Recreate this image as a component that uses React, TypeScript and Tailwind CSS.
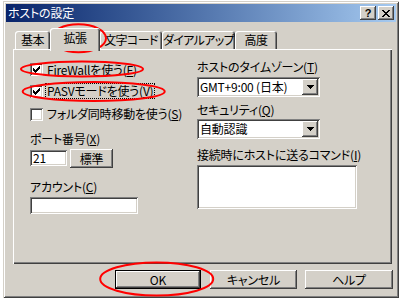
import React from "react";

const raised =
  "shadow-[inset_-1px_-1px_#404040,inset_1px_1px_#ffffff,inset_-2px_-2px_#808080,inset_2px_2px_#d4d0c8]";
const sunken =
  "shadow-[inset_1px_1px_#808080,inset_-1px_-1px_#ffffff,inset_2px_2px_#404040,inset_-2px_-2px_#d4d0c8]";

function Mark() {
  // classic 7x7 check mark
  const px: [number, number][] = [
    [6, 0], [5, 1], [6, 1], [0, 2], [4, 2], [5, 2], [6, 2],
    [0, 3], [1, 3], [3, 3], [4, 3], [5, 3],
    [0, 4], [1, 4], [2, 4], [3, 4], [4, 4],
    [1, 5], [2, 5], [3, 5], [2, 6],
  ];
  return (
    <svg width="7" height="7" viewBox="0 0 7 7" shapeRendering="crispEdges">
      {px.map(([x, y], i) => (
        <rect key={i} x={x} y={y} width="1" height="1" fill="#000" />
      ))}
    </svg>
  );
}

function CheckBox({ checked }: { checked?: boolean }) {
  return (
    <span className={`w-[13px] h-[13px] shrink-0 bg-white flex items-center justify-center ${sunken}`}>
      {checked && <Mark />}
    </span>
  );
}

function Arrow() {
  return (
    <svg width="7" height="4" viewBox="0 0 7 4" shapeRendering="crispEdges">
      <rect x="0" y="0" width="7" height="1" fill="#000" />
      <rect x="1" y="1" width="5" height="1" fill="#000" />
      <rect x="2" y="2" width="3" height="1" fill="#000" />
      <rect x="3" y="3" width="1" height="1" fill="#000" />
    </svg>
  );
}

function Select({ value }: { value: string }) {
  return (
    <div className={`w-[123px] h-[20px] bg-white flex items-center p-[2px] ${sunken}`}>
      <span className="flex-1 pl-[1px] leading-none whitespace-nowrap">{value}</span>
      <span className={`w-[16px] h-[16px] bg-[#d4d0c8] flex items-center justify-center ${raised}`}>
        <Arrow />
      </span>
    </div>
  );
}

function Tab({ label, w, active }: { label: string; w: string; active?: boolean }) {
  return (
    <div
      className={`${w} flex justify-center rounded-t-[3px] bg-[#d4d0c8] shadow-[inset_1px_1px_#ffffff,inset_-1px_0_#404040,inset_-2px_0_#808080] ${
        active ? "relative z-10 h-[23px] mb-[-2px] pt-[4px]" : "h-[18px] pt-[3px]"
      }`}
    >
      <span className="leading-none whitespace-nowrap tracking-[-0.6px]">{label}</span>
    </div>
  );
}

export default function App() {
  return (
    <div className="relative w-[402px] h-[299px] bg-white overflow-hidden whitespace-nowrap tracking-[-0.2px] font-['Noto_Sans_CJK_JP',sans-serif] text-[12px] text-black [font-feature-settings:'palt']">
      {/* ダイアログ本体 */}
      <div
        className={`ml-[3px] mt-[1px] w-[396px] h-[297px] p-[3px] bg-[#d4d0c8] shadow-[inset_1px_1px_#d4d0c8,inset_-1px_-1px_#404040,inset_2px_2px_#ffffff,inset_-2px_-2px_#808080]`}
      >
        {/* タイトルバー */}
        <div className="h-[18px] flex items-center justify-between pl-[2px] pr-[2px] bg-gradient-to-r from-[#0a246a] to-[#a6caf0]">
          <span className="text-white leading-none">ホストの設定</span>
          <div className="flex gap-[2px]">
            <span className={`w-[16px] h-[14px] bg-[#d4d0c8] flex items-center justify-center font-bold text-[11px] leading-none font-['Liberation_Sans',sans-serif] ${raised}`}>
              ?
            </span>
            <span className={`w-[16px] h-[14px] bg-[#d4d0c8] flex items-center justify-center ${raised}`}>
              <svg width="8" height="7" viewBox="0 0 8 7" shapeRendering="crispEdges">
                <path d="M0 0 L7 7 M1 0 L8 7 M7 0 L0 7 M8 0 L1 7" stroke="#000" strokeWidth="1" fill="none" />
              </svg>
            </span>
          </div>
        </div>

        {/* タブ */}
        <div className="mt-[6px] ml-[9px] h-[21px] flex items-end">
          <Tab label="基本" w="w-[35px]" />
          <Tab label="拡張" w="w-[50px]" active />
          <Tab label="文字コード" w="w-[62px]" />
          <Tab label="ダイアルアップ" w="w-[73px]" />
          <Tab label="高度" w="w-[42px]" />
        </div>

        {/* タブの中身 */}
        <div className="ml-[7px] w-[379px] h-[215px] flex pt-[10px] pl-[17px] shadow-[inset_1px_1px_#ffffff,inset_-1px_-1px_#404040,inset_-2px_-2px_#808080]">
          <div className="w-[167px] flex flex-col">
            <div className="h-[21px] flex items-center gap-[4px]">
              <CheckBox checked />
              <span className="leading-none">
                FireWallを使う(<u>F</u>)
              </span>
            </div>
            <div className="h-[22px] flex items-center gap-[2px]">
              <CheckBox checked />
              <span className="leading-none border border-dotted border-black px-[1px] py-[1px]">
                PASVモードを使う(<u>V</u>)
              </span>
            </div>
            <div className="h-[24px] flex items-center gap-[4px]">
              <CheckBox />
              <span className="leading-none">
                フォルダ同時移動を使う(<u>S</u>)
              </span>
            </div>

            <div className="mt-[5px] h-[16px] leading-[16px]">
              ポート番号(<u>X</u>)
            </div>
            <div className="mt-[2px] h-[19px] flex items-start gap-[3px]">
              <div className={`mt-[1px] w-[37px] h-[16px] bg-white pl-[3px] flex items-center leading-none ${sunken}`}>21</div>
              <button className={`w-[43px] h-[19px] bg-[#d4d0c8] leading-none ${raised}`}>標準</button>
            </div>

            <div className="mt-[11px] h-[16px] leading-[16px]">
              アカウント(<u>C</u>)
            </div>
            <div className={`mt-[2px] w-[108px] h-[17px] bg-white ${sunken}`} />
          </div>

          <div className="flex flex-col">
            <div className="h-[16px] leading-[16px]">
              ホストのタイムゾーン(<u>T</u>)
            </div>
            <div className="mt-[2px]">
              <Select value="GMT+9:00 (日本)" />
            </div>
            <div className="mt-[5px] h-[16px] leading-[16px]">
              セキュリティ(<u>Q</u>)
            </div>
            <div className="mt-[1px]">
              <Select value="自動認識" />
            </div>
            <div className="mt-[8px] h-[16px] leading-[16px]">
              接続時にホストに送るコマンド(<u>I</u>)
            </div>
            <div className={`mt-[2px] w-[160px] h-[44px] bg-white ${sunken}`} />
          </div>
        </div>

        {/* ボタン */}
        <div className="mt-[6px] ml-[109px] flex">
          <button className="w-[86px] h-[19px] border border-black bg-[#d4d0c8] shadow-[inset_-1px_-1px_#404040,inset_1px_1px_#ffffff,inset_-2px_-2px_#808080] leading-none">
            OK
          </button>
          <button className={`ml-[9px] w-[87px] h-[19px] bg-[#d4d0c8] leading-none ${raised}`}>キャンセル</button>
          <button className={`ml-[8px] w-[88px] h-[19px] bg-[#d4d0c8] leading-none ${raised}`}>ヘルプ</button>
        </div>
      </div>

      {/* 赤い丸の書き込み */}
      <svg className="absolute left-0 top-0 pointer-events-none" width="402" height="299" viewBox="0 0 402 299">
        <g fill="none" stroke="#ff0000" strokeWidth="2">
          <ellipse cx="78.5" cy="38.3" rx="27.5" ry="14" />
          <ellipse cx="82" cy="69" rx="61" ry="7.5" />
          <ellipse cx="93.7" cy="91.5" rx="71" ry="9.5" />
          <ellipse cx="156.7" cy="279" rx="56.5" ry="16.5" />
        </g>
      </svg>
    </div>
  );
}
